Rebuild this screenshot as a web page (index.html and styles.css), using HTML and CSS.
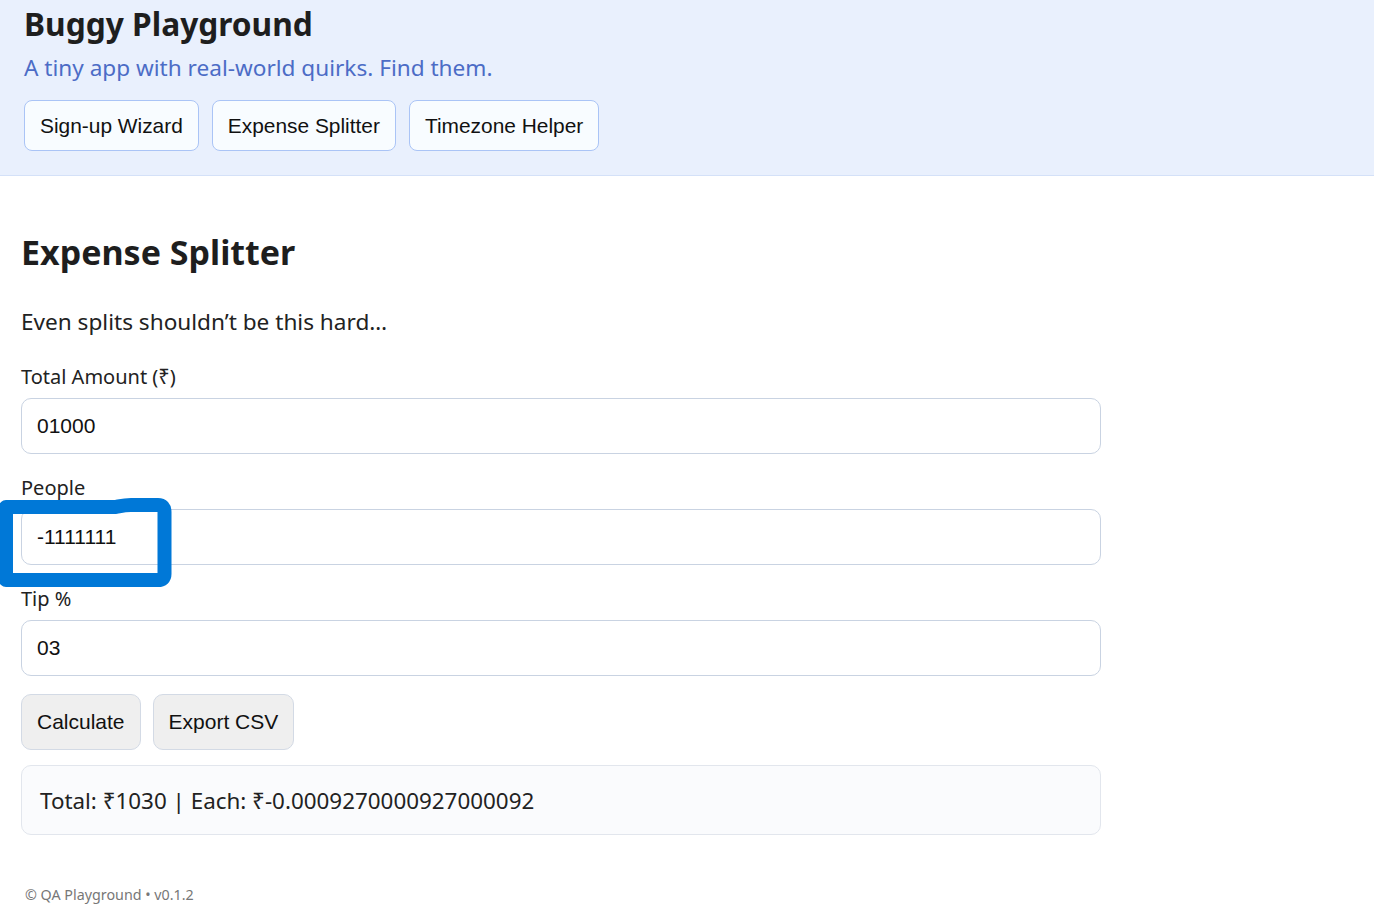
FILE: index.html
```html
<!DOCTYPE html>
<html lang="en">
<head>
<meta charset="utf-8">
<title>Buggy Playground</title>
<link rel="stylesheet" href="styles.css">
</head>
<body>
<header class="site-header">
  <h1 class="brand">Buggy Playground</h1>
  <p class="tagline">A tiny app with real-world quirks. Find them.</p>
  <nav class="tabs">
    <button class="tab">Sign-up Wizard</button>
    <button class="tab">Expense Splitter</button>
    <button class="tab">Timezone Helper</button>
  </nav>
</header>
<main class="content">
  <h2 class="page-title">Expense Splitter</h2>
  <p class="intro">Even splits shouldn’t be this hard…</p>
  <div class="field">
    <label class="label">Total Amount (₹)</label>
    <input class="input" type="text" value="01000">
  </div>
  <div class="field field-marked">
    <label class="label">People</label>
    <input class="input" type="text" value="-1111111">
    <svg class="marker" width="180" height="96" viewBox="0 0 180 96" aria-hidden="true">
      <path d="M6,84 L6,11 L116,11 C121,10 124,9 131,9 L158,9 Q164.5,9 164.5,16 L164.5,78 Q164.5,84 158,84 Z" fill="none" stroke="#0078d7" stroke-width="14" stroke-linejoin="round"/>
    </svg>
  </div>
  <div class="field">
    <label class="label">Tip %</label>
    <input class="input" type="text" value="03">
  </div>
  <div class="actions">
    <button class="btn">Calculate</button>
    <button class="btn">Export CSV</button>
  </div>
  <div class="result">Total: ₹1030 | Each: ₹-0.0009270000927000092</div>
</main>
<footer class="footer">© QA Playground • v0.1.2</footer>
</body>
</html>
```
FILE: styles.css
```css
* { box-sizing: border-box; }
html, body { margin: 0; padding: 0; background: #ffffff; }
body {
  font-family: "Noto Sans", "Open Sans", sans-serif;
  color: #222222;
  width: 1374px;
  min-height: 913px;
}
.site-header {
  background: #e9f0fd;
  border-bottom: 1px solid #d4e1f8;
  padding: 2px 24px 24px 24px;
  height: 176px;
}
.brand {
  margin: 0;
  font-size: 31.7px;
  font-weight: 700;
  line-height: 44px;
  color: #1e1e1e;
}
.tagline {
  margin: 2px 0 0 0;
  font-size: 22.6px;
  line-height: 40px;
  color: #4c6cc6;
}
.tabs {
  display: flex;
  gap: 13px;
  margin-top: 12px;
}
.tab {
  font-family: "Liberation Sans", Arial, sans-serif;
  font-size: 20.9px;
  color: #111111;
  background: #f8fcff;
  border: 1px solid #aac4f6;
  border-radius: 8px;
  height: 51px;
  padding: 0 15px;
}
.content {
  width: 1101px;
  padding: 52px 0 0 21px;
}
.page-title {
  margin: 0;
  font-size: 34px;
  font-weight: 700;
  line-height: 48px;
  color: #1e1e1e;
}
.intro {
  margin: 31px 0 0 0;
  font-size: 22.6px;
  line-height: 30px;
}
.field {
  display: flex;
  flex-direction: column;
  margin-top: 26px;
}
.field + .field { margin-top: 20px; }
.field-marked { position: relative; }
.label {
  font-size: 20px;
  line-height: 28px;
  margin-bottom: 7px;
}
.input {
  font-family: "Liberation Sans", Arial, sans-serif;
  font-size: 21px;
  color: #111111;
  height: 56px;
  border: 1px solid #c9d3e2;
  border-radius: 10px;
  padding: 0 15px;
  background: #ffffff;
}
.marker {
  position: absolute;
  left: -21px;
  top: 22px;
}
.actions {
  display: flex;
  gap: 12px;
  margin-top: 18px;
}
.btn {
  font-family: "Liberation Sans", Arial, sans-serif;
  font-size: 21px;
  color: #111111;
  background: #efefef;
  border: 1px solid #d3dae5;
  border-radius: 10px;
  height: 56px;
  padding: 0 15px;
}
.result {
  margin-top: 15px;
  background: #fafbfd;
  border: 1px solid #e2e6ed;
  border-radius: 10px;
  height: 70px;
  padding: 0 18px;
  display: flex;
  align-items: center;
  font-size: 22.4px;
}
.footer {
  margin-top: 50px;
  padding-left: 25px;
  font-size: 14.3px;
  color: #777777;
}
```
